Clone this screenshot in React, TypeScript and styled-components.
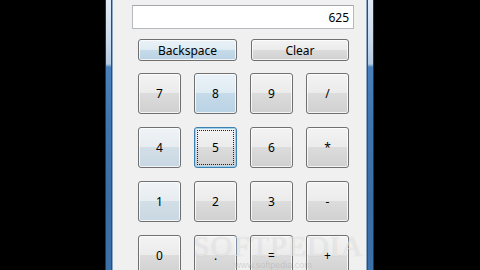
import React from "react";
import styled, { createGlobalStyle, css } from "styled-components";

const Global = createGlobalStyle`
  html, body { margin: 0; padding: 0; background: #000; }
  body { width: 480px; height: 270px; overflow: hidden; font-family: "Noto Sans", "Open Sans", sans-serif; }
`;

const Stage = styled.div`
  width: 480px;
  height: 270px;
  display: flex;
  padding-left: 105px;
  box-sizing: border-box;
  background: #000;
  overflow: hidden;
`;

const Window = styled.div`
  width: 269px;
  height: 270px;
  display: flex;
  position: relative;
  overflow: hidden;
`;

const Frame = styled.div<{ $side: "left" | "right" }>`
  width: 8px;
  flex: none;
  background:
    linear-gradient(to right,
      #22344c 0 1px,
      transparent 1px 6px,
      #24507f 6px 7px,
      #8fa6bf 7px 8px),
    linear-gradient(to bottom,
      #dfeaf6 0px, #c9dbef 40px, #b4cbe4 64px,
      #4b82bd 67px, #3f75b1 120px, #3a6ea8 200px, #3b70aa 270px);
  ${(p) => p.$side === "right" && css`transform: scaleX(-1);`}
`;

const Client = styled.div`
  flex: 1;
  background: #f0f0f0;
  padding-top: 5px;
  box-sizing: border-box;
  display: flex;
  flex-direction: column;
  overflow: hidden;
  & > * { flex: none; }
`;

const Display = styled.div`
  margin: 0 12px 0 19px;
  height: 24px;
  box-sizing: border-box;
  background: #fff;
  border: 1px solid #b5b8bd;
  border-top-color: #a3a6ab;
  display: flex;
  align-items: center;
  justify-content: flex-end;
  padding-right: 4px;
  font-size: 12px;
  color: #000;
`;

const TopRow = styled.div`
  margin-top: 10px;
  padding-left: 25px;
  display: flex;
  gap: 14px;
`;

type Tone = "normal" | "hover" | "soft" | "focus";

const buttonBase = css<{ $tone?: Tone }>`
  box-sizing: border-box;
  border: 1px solid #707070;
  border-radius: 3px;
  font-family: "Noto Sans", "Open Sans", sans-serif;
  font-size: 12px;
  color: #000;
  display: flex;
  align-items: center;
  justify-content: center;
  box-shadow: inset 0 0 0 1px rgba(255, 255, 255, 0.75);
  background: linear-gradient(to bottom, #f3f3f3 0%, #ebebeb 50%, #dcdcdc 50%, #d0d0d0 100%);
  ${(p) =>
    p.$tone === "hover" &&
    css`
      background: linear-gradient(to bottom, #eaf2f8 0%, #dfebf3 50%, #c6dbea 50%, #b9d2e4 100%);
    `}
  ${(p) =>
    p.$tone === "soft" &&
    css`
      background: linear-gradient(to bottom, #eff3f6 0%, #e6ecf0 50%, #d3dfe7 50%, #c8d7e2 100%);
    `}
  ${(p) =>
    p.$tone === "focus" &&
    css`
      border-color: #3c7fb1;
      box-shadow: inset 0 0 0 1px #9ed2ec;
      position: relative;
      &::after {
        content: "";
        position: absolute;
        inset: 2px;
        border: 1px dotted #222;
      }
    `}
`;

const WideButton = styled.div<{ $tone?: Tone; $w: number }>`
  ${buttonBase}
  width: ${(p) => p.$w}px;
  height: 22px;
`;

const Keypad = styled.div`
  margin-top: 12px;
  padding-left: 25px;
  display: grid;
  grid-template-columns: repeat(4, 43px);
  grid-auto-rows: 41px;
  column-gap: 13px;
  row-gap: 13px;
`;

const Key = styled.div<{ $tone?: Tone }>`
  ${buttonBase}
  padding-bottom: 1px;
`;

const Watermark = styled.div`
  position: absolute;
  left: 88px;
  top: 232px;
  width: 160px;
  text-align: center;
  pointer-events: none;
  font-family: "Liberation Serif", serif;
  color: rgba(255, 255, 255, 0.5);
  text-shadow: 0 0 1px rgba(120, 120, 120, 0.3);
`;

const WmBig = styled.div`
  font-size: 30px;
  letter-spacing: 1px;
  line-height: 28px;
`;

const WmSmall = styled.div`
  font-family: "Liberation Sans", sans-serif;
  font-size: 9px;
  line-height: 10px;
  color: rgba(170, 170, 170, 0.45);
  text-shadow: none;
`;

const keys: { label: string; tone: Tone }[] = [
  { label: "7", tone: "normal" },
  { label: "8", tone: "hover" },
  { label: "9", tone: "normal" },
  { label: "/", tone: "normal" },
  { label: "4", tone: "soft" },
  { label: "5", tone: "focus" },
  { label: "6", tone: "normal" },
  { label: "*", tone: "normal" },
  { label: "1", tone: "soft" },
  { label: "2", tone: "normal" },
  { label: "3", tone: "normal" },
  { label: "-", tone: "normal" },
  { label: "0", tone: "normal" },
  { label: ".", tone: "normal" },
  { label: "=", tone: "normal" },
  { label: "+", tone: "normal" },
];

export default function App() {
  return (
    <>
      <Global />
      <Stage>
        <Window>
          <Frame $side="left" />
          <Client>
            <Display>625</Display>
            <TopRow>
              <WideButton $w={99} $tone="hover">Backspace</WideButton>
              <WideButton $w={98}>Clear</WideButton>
            </TopRow>
            <Keypad>
              {keys.map((k) => (
                <Key key={k.label} $tone={k.tone}>
                  {k.label}
                </Key>
              ))}
            </Keypad>
          </Client>
          <Frame $side="right" />
          <Watermark>
            <WmBig>SOFTPEDIA</WmBig>
            <WmSmall>www.softpedia.com</WmSmall>
          </Watermark>
        </Window>
      </Stage>
    </>
  );
}
